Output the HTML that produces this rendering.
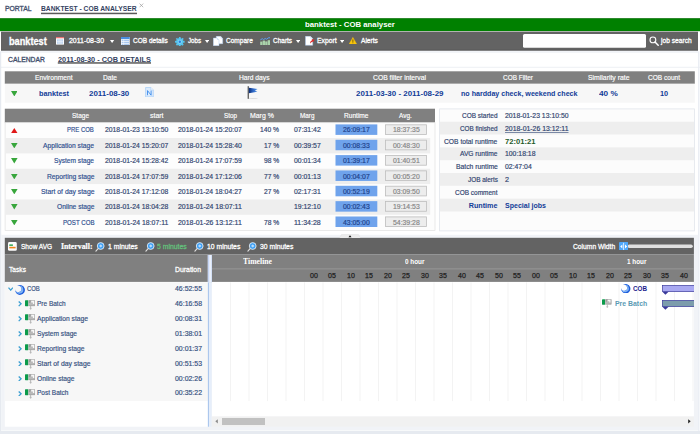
<!DOCTYPE html>
<html><head><meta charset="utf-8"><title>banktest - COB analyser</title>
<style>
html,body{margin:0;padding:0;}
body{width:700px;height:434px;overflow:hidden;background:#fff;font-family:"Liberation Sans", sans-serif;position:relative;}
#r{position:absolute;left:0;top:0;width:700px;height:434px;overflow:hidden;}
#r div,#r span,#r svg{position:absolute;}
#r span{white-space:nowrap;}
</style></head><body><div id="r">
<svg style="left:0;top:0" width="700" height="434" viewBox="0 0 700 434">
<rect x="0.00" y="0.00" width="700.00" height="434.00" fill="#ffffff"/>
<rect x="0.00" y="66.80" width="700.00" height="0.90" fill="#eceef3"/>
<rect x="0.00" y="51.40" width="1.20" height="383.00" fill="#e6eaf0"/>
<rect x="698.20" y="51.40" width="1.20" height="383.00" fill="#e6eaf2"/>
<rect x="1.20" y="234.80" width="697.00" height="196.20" fill="#f1f3f7"/>
<rect x="41.00" y="12.70" width="96.00" height="1.50" fill="#5a5a5a"/>
<rect x="0.00" y="18.40" width="700.00" height="12.80" fill="#008000"/>
<rect x="0.00" y="18.30" width="700.00" height="0.60" fill="#0a6e0a"/>
<rect x="1.00" y="31.20" width="697.00" height="0.90" fill="#a9a9a9"/>
<rect x="1.00" y="50.50" width="697.00" height="2.40" fill="#f2f4f8"/>
<rect x="1.00" y="32.00" width="697.00" height="18.50" fill="#636363"/>
<rect x="1.00" y="49.40" width="697.00" height="1.10" fill="#5b5b5b"/>
<rect x="523.00" y="34.10" width="123.00" height="13.70" fill="#ffffff" rx="1.5"/>
<rect x="57.80" y="62.20" width="93.20" height="1.50" fill="#5a5a5a"/>
<rect x="4.80" y="71.30" width="690.00" height="12.50" fill="#808080"/>
<rect x="4.80" y="83.80" width="690.00" height="18.90" fill="#f7f7f7"/>
<rect x="4.80" y="108.70" width="430.20" height="14.00" fill="#808080"/>
<rect x="5.10" y="122.70" width="429.90" height="107.75" fill="#fdfdfd" stroke="#e0e0e0" stroke-width="0.7"/>
<rect x="335.50" y="124.40" width="41.80" height="10.50" fill="#6fa3ec"/>
<rect x="385.40" y="124.80" width="41.00" height="9.70" fill="#ededed" stroke="#bdbdbd" stroke-width="0.8"/>
<rect x="5.40" y="138.05" width="424.80" height="15.35" fill="#eeeeee"/>
<rect x="335.50" y="139.75" width="41.80" height="10.50" fill="#6fa3ec"/>
<rect x="385.40" y="140.15" width="41.00" height="9.70" fill="#ededed" stroke="#bdbdbd" stroke-width="0.8"/>
<rect x="335.50" y="155.10" width="41.80" height="10.50" fill="#6fa3ec"/>
<rect x="385.40" y="155.50" width="41.00" height="9.70" fill="#ededed" stroke="#bdbdbd" stroke-width="0.8"/>
<rect x="5.40" y="168.75" width="424.80" height="15.35" fill="#eeeeee"/>
<rect x="335.50" y="170.45" width="41.80" height="10.50" fill="#6fa3ec"/>
<rect x="385.40" y="170.85" width="41.00" height="9.70" fill="#ededed" stroke="#bdbdbd" stroke-width="0.8"/>
<rect x="335.50" y="185.80" width="41.80" height="10.50" fill="#6fa3ec"/>
<rect x="385.40" y="186.20" width="41.00" height="9.70" fill="#ededed" stroke="#bdbdbd" stroke-width="0.8"/>
<rect x="5.40" y="199.45" width="424.80" height="15.35" fill="#eeeeee"/>
<rect x="335.50" y="201.15" width="41.80" height="10.50" fill="#6fa3ec"/>
<rect x="385.40" y="201.55" width="41.00" height="9.70" fill="#ededed" stroke="#bdbdbd" stroke-width="0.8"/>
<rect x="335.50" y="216.50" width="41.80" height="10.50" fill="#6fa3ec"/>
<rect x="385.40" y="216.90" width="41.00" height="9.70" fill="#ededed" stroke="#bdbdbd" stroke-width="0.8"/>
<rect x="439.60" y="108.90" width="254.80" height="122.00" fill="#fcfcfc" stroke="#e1e5ec" stroke-width="0.8"/>
<rect x="440.00" y="121.72" width="254.00" height="12.82" fill="#eeeeee"/>
<rect x="440.00" y="147.36" width="254.00" height="12.82" fill="#eeeeee"/>
<rect x="440.00" y="173.00" width="254.00" height="12.82" fill="#eeeeee"/>
<rect x="440.00" y="198.64" width="254.00" height="12.82" fill="#eeeeee"/>
<rect x="4.80" y="237.80" width="689.10" height="16.70" fill="#636363"/>
<rect x="627.50" y="244.40" width="65.30" height="3.60" fill="#e0e0e0" rx="1.8"/>
<rect x="4.80" y="254.50" width="689.10" height="27.80" fill="#808080"/>
<rect x="212.00" y="268.50" width="481.90" height="0.80" fill="#9c9c9c"/>
<rect x="4.80" y="281.90" width="203.10" height="144.80" fill="#ffffff"/>
<rect x="211.70" y="281.90" width="482.20" height="134.60" fill="#ffffff"/>
<rect x="4.80" y="282.30" width="203.10" height="118.80" fill="#f7f7f7"/>
<rect x="230.10" y="282.30" width="0.80" height="118.80" fill="#f0f0f0"/>
<rect x="248.60" y="282.30" width="0.80" height="118.80" fill="#f0f0f0"/>
<rect x="267.10" y="282.30" width="0.80" height="118.80" fill="#f0f0f0"/>
<rect x="285.60" y="282.30" width="0.80" height="118.80" fill="#f0f0f0"/>
<rect x="304.10" y="282.30" width="0.80" height="118.80" fill="#f0f0f0"/>
<rect x="322.60" y="282.30" width="0.80" height="118.80" fill="#f0f0f0"/>
<rect x="341.10" y="282.30" width="0.80" height="118.80" fill="#f0f0f0"/>
<rect x="359.60" y="282.30" width="0.80" height="118.80" fill="#f0f0f0"/>
<rect x="378.10" y="282.30" width="0.80" height="118.80" fill="#f0f0f0"/>
<rect x="396.60" y="282.30" width="0.80" height="118.80" fill="#f0f0f0"/>
<rect x="415.10" y="282.30" width="0.80" height="118.80" fill="#f0f0f0"/>
<rect x="433.60" y="282.30" width="0.80" height="118.80" fill="#f0f0f0"/>
<rect x="452.10" y="282.30" width="0.80" height="118.80" fill="#f0f0f0"/>
<rect x="470.60" y="282.30" width="0.80" height="118.80" fill="#f0f0f0"/>
<rect x="489.10" y="282.30" width="0.80" height="118.80" fill="#f0f0f0"/>
<rect x="507.60" y="282.30" width="0.80" height="118.80" fill="#f0f0f0"/>
<rect x="526.10" y="282.30" width="0.80" height="118.80" fill="#f0f0f0"/>
<rect x="544.60" y="282.30" width="0.80" height="118.80" fill="#f0f0f0"/>
<rect x="563.10" y="282.30" width="0.80" height="118.80" fill="#f0f0f0"/>
<rect x="581.60" y="282.30" width="0.80" height="118.80" fill="#f0f0f0"/>
<rect x="600.10" y="282.30" width="0.80" height="118.80" fill="#f0f0f0"/>
<rect x="618.60" y="282.30" width="0.80" height="118.80" fill="#f0f0f0"/>
<rect x="637.10" y="282.30" width="0.80" height="118.80" fill="#f0f0f0"/>
<rect x="655.60" y="282.30" width="0.80" height="118.80" fill="#f0f0f0"/>
<rect x="674.10" y="282.30" width="0.80" height="118.80" fill="#f0f0f0"/>
<rect x="692.60" y="282.30" width="0.80" height="118.80" fill="#f0f0f0"/>
<rect x="207.90" y="282.30" width="3.80" height="144.40" fill="#e6eefa"/>
<rect x="207.90" y="282.30" width="1.00" height="144.40" fill="#a6c2ec"/>
<rect x="207.80" y="255.00" width="4.20" height="27.30" fill="#eef3fc"/>
<rect x="207.80" y="255.00" width="1.50" height="27.30" fill="#c6d5f3"/>
<rect x="210.90" y="255.00" width="1.10" height="27.30" fill="#d4e0f6"/>
<rect x="211.70" y="416.50" width="482.20" height="10.20" fill="#f1f1f1"/>
<rect x="222.00" y="418.00" width="43.00" height="7.00" fill="#c1c1c1"/>
<rect x="0.00" y="430.90" width="700.00" height="3.10" fill="#e6eaf0"/>
<rect x="1.20" y="430.20" width="697.00" height="0.80" fill="#f9fafc"/>
</svg>
<span style="left:4.80px;top:4.09px;font-size:7.4px;line-height:9.62px;color:#3f4d6b;transform:scaleX(0.9207);transform-origin:0 0;-webkit-text-stroke:0.32px #3f4d6b;">PORTAL</span>
<span style="left:41.10px;top:3.96px;font-size:7.6px;line-height:9.88px;color:#34425f;font-weight:bold;transform:scaleX(0.8862);transform-origin:0 0;">BANKTEST - COB ANALYSER</span>
<svg style="left:139px;top:2.6px" width="5" height="5" viewBox="0 0 5 5"><path d="M0.6 0.6L4.2 4.2M4.2 0.6L0.6 4.2" stroke="#9a9a9a" stroke-width="0.7" fill="none"/></svg>
<span style="left:304.50px;top:19.60px;font-size:8px;line-height:10.4px;color:#ffffff;font-weight:bold;transform:scaleX(0.9710);transform-origin:0 0;">banktest - COB analyser</span>
<span style="left:8.60px;top:34.70px;font-size:10px;line-height:13.0px;color:#ffffff;font-weight:bold;transform:scaleX(0.9191);transform-origin:0 0;-webkit-text-stroke:0.3px #ffffff;">banktest</span>
<svg style="left:56px;top:37.2px" width="8" height="7.6" viewBox="0 0 8 7.6"><rect width="8" height="7.6" fill="#fff"/><rect width="8" height="1.3" fill="#e87474"/><rect x="0.9" y="2.3" width="6.2" height="4.5" fill="#bcd3f0"/><path d="M3 2.6V6.8M5 2.6V6.8M0.9 4.7H7.1" stroke="#fff" stroke-width="0.5"/></svg>
<span style="left:69.00px;top:36.39px;font-size:7.4px;line-height:9.62px;color:#ffffff;transform:scaleX(0.9392);transform-origin:0 0;-webkit-text-stroke:0.3px #ffffff;">2011-08-30</span>
<svg style="left:110.4px;top:39.800000000000004px" width="4.2" height="3" viewBox="0 0 4.2 3"><path d="M0 0H4.2L2.1 3Z" fill="#fff"/></svg>
<svg style="left:121px;top:36.9px" width="8.7" height="8.5" viewBox="0 0 8.7 8.5"><rect width="8.7" height="8.5" fill="#fff"/><rect width="8.7" height="2.2" fill="#4a8fe0"/><rect x="0.6" y="2.9" width="7.5" height="1.3" fill="#a9c8ee"/><rect x="0.6" y="4.8" width="7.5" height="1.3" fill="#a9c8ee"/><rect x="0.6" y="6.7" width="7.5" height="1.3" fill="#a9c8ee"/><rect x="2.6" y="2.2" width="0.5" height="6.3" fill="#fff"/></svg>
<span style="left:133.10px;top:36.39px;font-size:7.4px;line-height:9.62px;color:#ffffff;transform:scaleX(0.8824);transform-origin:0 0;-webkit-text-stroke:0.3px #ffffff;">COB details</span>
<svg style="left:175px;top:36.6px" width="9.6" height="9.6" viewBox="0 0 9.6 9.6"><path d="M9.61 3.84L9.61 5.76L8.48 5.53L7.92 6.88L8.87 7.52L7.52 8.87L6.88 7.92L5.53 8.48L5.76 9.61L3.84 9.61L4.07 8.48L2.72 7.92L2.08 8.87L0.73 7.52L1.68 6.88L1.12 5.53L-0.01 5.76L-0.01 3.84L1.12 4.07L1.68 2.72L0.73 2.08L2.08 0.73L2.72 1.68L4.07 1.12L3.84 -0.01L5.76 -0.01L5.53 1.12L6.88 1.68L7.52 0.73L8.87 2.08L7.92 2.72L8.48 4.07Z" fill="#55c4ef"/><circle cx="4.8" cy="4.8" r="2.0" fill="#8edcf8"/><circle cx="4.8" cy="4.8" r="1.25" fill="#2a7fe2"/></svg>
<span style="left:187.90px;top:36.39px;font-size:7.4px;line-height:9.62px;color:#ffffff;transform:scaleX(0.8448);transform-origin:0 0;-webkit-text-stroke:0.3px #ffffff;">Jobs</span>
<svg style="left:204.7px;top:39.800000000000004px" width="4.2" height="3" viewBox="0 0 4.2 3"><path d="M0 0H4.2L2.1 3Z" fill="#fff"/></svg>
<svg style="left:213.4px;top:36px" width="10.2" height="10" viewBox="0 0 10.2 10"><path d="M3.3 0.3H7.6L9.7 2.4V7.7H3.3Z" fill="#fff" stroke="#b4d0f2" stroke-width="0.5"/><path d="M7.6 0.3V2.4H9.7Z" fill="#cfe0f6"/><path d="M0.3 2.1H4.2L6 3.9V9.7H0.3Z" fill="#fff" stroke="#a9c8ef" stroke-width="0.5"/><path d="M4.2 2.1V3.9H6Z" fill="#cfe0f6"/></svg>
<span style="left:226.00px;top:36.39px;font-size:7.4px;line-height:9.62px;color:#ffffff;transform:scaleX(0.8847);transform-origin:0 0;-webkit-text-stroke:0.3px #ffffff;">Compare</span>
<svg style="left:259.6px;top:36.6px" width="10.4" height="8.6" viewBox="0 0 10.4 8.6"><rect x="0.2" y="4.6" width="2.3" height="3.8" fill="#aad2aa"/><rect x="2.7" y="3.6" width="2.3" height="4.8" fill="#aad2aa"/><rect x="5.2" y="4.4" width="2.3" height="4" fill="#aad2aa"/><rect x="7.7" y="3.2" width="2.4" height="5.2" fill="#aad2aa"/><path d="M0.3 2.9L2.3 1.7L3.6 2.6L5.2 1.5L6.6 2.2L8.2 0.9L10.1 0.7" stroke="#5b9df0" stroke-width="1" fill="none"/></svg>
<span style="left:272.60px;top:36.39px;font-size:7.4px;line-height:9.62px;color:#ffffff;transform:scaleX(0.8769);transform-origin:0 0;-webkit-text-stroke:0.3px #ffffff;">Charts</span>
<svg style="left:295.7px;top:39.800000000000004px" width="4.2" height="3" viewBox="0 0 4.2 3"><path d="M0 0H4.2L2.1 3Z" fill="#fff"/></svg>
<svg style="left:304.6px;top:36px" width="10" height="9.6" viewBox="0 0 10 9.6"><path d="M0.5 0.3H5.4L7.7 2.6V9.3H0.5Z" fill="#fff" stroke="#a9c8ef" stroke-width="0.5"/><path d="M5.4 0.3V2.6H7.7Z" fill="#cfe0f6"/><path transform="translate(0.2 -0.5) rotate(-22 6.5 5.5)" d="M4 7.4C4.5 5.7 5.8 4.9 7.2 4.9V3.7L9.6 5.5L7.2 7.2V6.2C6 6.2 4.9 6.5 4 7.4Z" fill="#dc2a2a"/></svg>
<span style="left:316.70px;top:36.39px;font-size:7.4px;line-height:9.62px;color:#ffffff;transform:scaleX(0.9216);transform-origin:0 0;-webkit-text-stroke:0.3px #ffffff;">Export</span>
<svg style="left:339.7px;top:39.800000000000004px" width="4.2" height="3" viewBox="0 0 4.2 3"><path d="M0 0H4.2L2.1 3Z" fill="#fff"/></svg>
<svg style="left:348.8px;top:37.4px" width="7.8" height="7" viewBox="0 0 7.8 7"><path d="M3.9 0.2L7.7 6.9H0.1Z" fill="#f7c40c" stroke="#f7c40c" stroke-width="0.3" stroke-linejoin="round"/><rect x="3.5" y="2.4" width="0.8" height="2.5" fill="#5e4700"/><rect x="3.5" y="5.4" width="0.8" height="0.8" fill="#5e4700"/></svg>
<span style="left:361.40px;top:36.39px;font-size:7.4px;line-height:9.62px;color:#ffffff;transform:scaleX(0.8939);transform-origin:0 0;-webkit-text-stroke:0.3px #ffffff;">Alerts</span>
<svg style="left:648.6px;top:36.4px" width="10" height="10" viewBox="0 0 10 10"><circle cx="3.9" cy="3.9" r="2.9" fill="none" stroke="#fff" stroke-width="1.1"/><path d="M6 6L9.2 9.2" stroke="#fff" stroke-width="1.5" stroke-linecap="round"/></svg>
<span style="left:661.30px;top:36.39px;font-size:7.4px;line-height:9.62px;color:#ffffff;transform:scaleX(0.9000);transform-origin:0 0;-webkit-text-stroke:0.3px #ffffff;">job search</span>
<span style="left:8.00px;top:54.69px;font-size:7.4px;line-height:9.62px;color:#3f4d6b;transform:scaleX(0.9143);transform-origin:0 0;-webkit-text-stroke:0.32px #3f4d6b;">CALENDAR</span>
<span style="left:57.80px;top:54.56px;font-size:7.6px;line-height:9.88px;color:#34425f;font-weight:bold;transform:scaleX(0.9680);transform-origin:0 0;">2011-08-30 - COB DETAILS</span>
<span style="left:35.00px;top:72.65px;font-size:7.0px;line-height:9.1px;color:#fff;transform:scaleX(0.9568);transform-origin:0 0;-webkit-text-stroke:0.16px #fff;">Environment</span>
<span style="left:102.50px;top:72.65px;font-size:7.0px;line-height:9.1px;color:#fff;transform:scaleX(0.9461);transform-origin:0 0;-webkit-text-stroke:0.16px #fff;">Date</span>
<span style="left:238.75px;top:72.65px;font-size:7.0px;line-height:9.1px;color:#fff;transform:scaleX(0.9559);transform-origin:0 0;-webkit-text-stroke:0.16px #fff;">Hard days</span>
<span style="left:372.50px;top:72.65px;font-size:7.0px;line-height:9.1px;color:#fff;transform:scaleX(0.9661);transform-origin:0 0;-webkit-text-stroke:0.16px #fff;">COB filter interval</span>
<span style="left:503.00px;top:72.65px;font-size:7.0px;line-height:9.1px;color:#fff;transform:scaleX(0.9182);transform-origin:0 0;-webkit-text-stroke:0.16px #fff;">COB Filter</span>
<span style="left:587.75px;top:72.65px;font-size:7.0px;line-height:9.1px;color:#fff;transform:scaleX(0.9786);transform-origin:0 0;-webkit-text-stroke:0.16px #fff;">Similarity rate</span>
<span style="left:648.00px;top:72.65px;font-size:7.0px;line-height:9.1px;color:#fff;transform:scaleX(0.9343);transform-origin:0 0;-webkit-text-stroke:0.16px #fff;">COB count</span>
<svg style="left:10.80px;top:90.80px" width="6.6" height="5.4" viewBox="0 0 6.6 5.4"><path d="M0 0H6.6L3.3 5.4Z" fill="#38a63c"/></svg>
<span style="left:39.20px;top:88.56px;font-size:7.6px;line-height:9.88px;color:#123c98;font-weight:bold;transform:scaleX(0.9605);transform-origin:0 0;">banktest</span>
<span style="left:88.90px;top:88.56px;font-size:7.6px;line-height:9.88px;color:#123c98;font-weight:bold;transform:scaleX(1.0485);transform-origin:0 0;">2011-08-30</span>
<svg style="left:145px;top:86.8px" width="9" height="10.6" viewBox="0 0 9 10.6"><path d="M0.6 0.5H5.8L8.3 3V10H0.6Z" fill="#dcebfc" stroke="#a3ccf6" stroke-width="0.7"/><path d="M5.8 0.5V3H8.3" fill="#f4f9ff" stroke="#a3ccf6" stroke-width="0.5"/><path d="M2.5 8.2V3.6L6.1 8.2V3.6" stroke="#3586ea" stroke-width="0.85" fill="none"/></svg>
<svg style="left:247px;top:85.8px" width="12" height="13.6" viewBox="0 0 12 13.6"><defs><linearGradient id="fg" x1="0" x2="1" y1="0" y2="0"><stop offset="0" stop-color="#0b2c74"/><stop offset="0.45" stop-color="#2a62c0"/><stop offset="1" stop-color="#5a9ae8"/></linearGradient></defs><ellipse cx="6" cy="12.9" rx="5" ry="0.55" fill="#d2d2d2"/><rect x="0.7" y="0.2" width="1" height="12.6" fill="#2c2c2c"/><path d="M1.8 1.8L10.6 3L8 4.4L10.4 5.8L1.8 7.2Z" fill="url(#fg)"/></svg>
<span style="left:355.50px;top:88.56px;font-size:7.6px;line-height:9.88px;color:#123c98;font-weight:bold;transform:scaleX(1.0465);transform-origin:0 0;">2011-03-30 - 2011-08-29</span>
<span style="left:461.00px;top:88.56px;font-size:7.6px;line-height:9.88px;color:#123c98;font-weight:bold;transform:scaleX(0.9356);transform-origin:0 0;">no hardday check, weekend check</span>
<span style="left:599.00px;top:88.56px;font-size:7.6px;line-height:9.88px;color:#123c98;font-weight:bold;transform:scaleX(1.0859);transform-origin:0 0;">40 %</span>
<span style="left:659.80px;top:88.56px;font-size:7.6px;line-height:9.88px;color:#123c98;font-weight:bold;transform:scaleX(0.9701);transform-origin:0 0;">10</span>
<span style="left:72.00px;top:111.05px;font-size:7.0px;line-height:9.1px;color:#fff;transform:scaleX(0.9291);transform-origin:0 0;-webkit-text-stroke:0.16px #fff;">Stage</span>
<span style="left:149.55px;top:111.05px;font-size:7.0px;line-height:9.1px;color:#fff;transform:scaleX(0.9908);transform-origin:0 0;-webkit-text-stroke:0.16px #fff;">start</span>
<span style="left:223.70px;top:111.05px;font-size:7.0px;line-height:9.1px;color:#fff;transform:scaleX(0.9024);transform-origin:0 0;-webkit-text-stroke:0.16px #fff;">Stop</span>
<span style="left:250.00px;top:111.05px;font-size:7.0px;line-height:9.1px;color:#fff;transform:scaleX(0.9865);transform-origin:0 0;-webkit-text-stroke:0.16px #fff;">Marg %</span>
<span style="left:299.95px;top:111.05px;font-size:7.0px;line-height:9.1px;color:#fff;transform:scaleX(0.9089);transform-origin:0 0;-webkit-text-stroke:0.16px #fff;">Marg</span>
<span style="left:344.25px;top:111.05px;font-size:7.0px;line-height:9.1px;color:#fff;transform:scaleX(0.9395);transform-origin:0 0;-webkit-text-stroke:0.16px #fff;">Runtime</span>
<span style="left:399.30px;top:111.05px;font-size:7.0px;line-height:9.1px;color:#fff;transform:scaleX(0.9215);transform-origin:0 0;-webkit-text-stroke:0.16px #fff;">Avg.</span>
<svg style="left:11.40px;top:127.83px" width="6.6" height="5.2" viewBox="0 0 6.6 5.2"><path d="M0 5.2H6.6L3.3 0Z" fill="#e01818"/></svg>
<span style="left:67.20px;top:125.44px;font-size:7.2px;line-height:9.36px;color:#2f4f8f;transform:scaleX(0.8282);transform-origin:0 0;-webkit-text-stroke:0.18px #2f4f8f;">PRE COB</span>
<span style="left:104.60px;top:125.44px;font-size:7.2px;line-height:9.36px;color:#30446f;transform:scaleX(0.9483);transform-origin:0 0;-webkit-text-stroke:0.18px #30446f;">2018-01-23 13:10:50</span>
<span style="left:178.20px;top:125.44px;font-size:7.2px;line-height:9.36px;color:#30446f;transform:scaleX(0.9558);transform-origin:0 0;-webkit-text-stroke:0.18px #30446f;">2018-01-24 15:20:07</span>
<span style="left:259.80px;top:125.44px;font-size:7.2px;line-height:9.36px;color:#30446f;transform:scaleX(0.9318);transform-origin:0 0;-webkit-text-stroke:0.18px #30446f;">140 %</span>
<span style="left:293.80px;top:125.44px;font-size:7.2px;line-height:9.36px;color:#30446f;transform:scaleX(0.9541);transform-origin:0 0;-webkit-text-stroke:0.18px #30446f;">07:31:42</span>
<span style="left:343.05px;top:125.44px;font-size:7.2px;line-height:9.36px;color:#1d3f8a;transform:scaleX(0.9541);transform-origin:0 0;-webkit-text-stroke:0.18px #1d3f8a;">26:09:17</span>
<span style="left:392.55px;top:125.44px;font-size:7.2px;line-height:9.36px;color:#858585;transform:scaleX(0.9541);transform-origin:0 0;-webkit-text-stroke:0.18px #858585;">18:37:35</span>
<svg style="left:11.40px;top:142.88px" width="6.6" height="5.4" viewBox="0 0 6.6 5.4"><path d="M0 0H6.6L3.3 5.4Z" fill="#38a63c"/></svg>
<span style="left:43.00px;top:140.80px;font-size:7.2px;line-height:9.36px;color:#2f4f8f;transform:scaleX(0.9315);transform-origin:0 0;-webkit-text-stroke:0.18px #2f4f8f;">Application stage</span>
<span style="left:104.60px;top:140.80px;font-size:7.2px;line-height:9.36px;color:#30446f;transform:scaleX(0.9483);transform-origin:0 0;-webkit-text-stroke:0.18px #30446f;">2018-01-24 15:20:07</span>
<span style="left:178.20px;top:140.80px;font-size:7.2px;line-height:9.36px;color:#30446f;transform:scaleX(0.9558);transform-origin:0 0;-webkit-text-stroke:0.18px #30446f;">2018-01-24 15:28:40</span>
<span style="left:263.60px;top:140.80px;font-size:7.2px;line-height:9.36px;color:#30446f;transform:scaleX(0.9274);transform-origin:0 0;-webkit-text-stroke:0.18px #30446f;">17 %</span>
<span style="left:293.80px;top:140.80px;font-size:7.2px;line-height:9.36px;color:#30446f;transform:scaleX(0.9541);transform-origin:0 0;-webkit-text-stroke:0.18px #30446f;">00:39:57</span>
<span style="left:343.05px;top:140.80px;font-size:7.2px;line-height:9.36px;color:#1d3f8a;transform:scaleX(0.9541);transform-origin:0 0;-webkit-text-stroke:0.18px #1d3f8a;">00:08:33</span>
<span style="left:392.55px;top:140.80px;font-size:7.2px;line-height:9.36px;color:#858585;transform:scaleX(0.9541);transform-origin:0 0;-webkit-text-stroke:0.18px #858585;">00:48:30</span>
<svg style="left:11.40px;top:158.23px" width="6.6" height="5.4" viewBox="0 0 6.6 5.4"><path d="M0 0H6.6L3.3 5.4Z" fill="#38a63c"/></svg>
<span style="left:54.00px;top:156.15px;font-size:7.2px;line-height:9.36px;color:#2f4f8f;transform:scaleX(0.9186);transform-origin:0 0;-webkit-text-stroke:0.18px #2f4f8f;">System stage</span>
<span style="left:104.60px;top:156.15px;font-size:7.2px;line-height:9.36px;color:#30446f;transform:scaleX(0.9483);transform-origin:0 0;-webkit-text-stroke:0.18px #30446f;">2018-01-24 15:28:42</span>
<span style="left:178.20px;top:156.15px;font-size:7.2px;line-height:9.36px;color:#30446f;transform:scaleX(0.9558);transform-origin:0 0;-webkit-text-stroke:0.18px #30446f;">2018-01-24 17:07:59</span>
<span style="left:263.60px;top:156.15px;font-size:7.2px;line-height:9.36px;color:#30446f;transform:scaleX(0.9274);transform-origin:0 0;-webkit-text-stroke:0.18px #30446f;">98 %</span>
<span style="left:293.80px;top:156.15px;font-size:7.2px;line-height:9.36px;color:#30446f;transform:scaleX(0.9541);transform-origin:0 0;-webkit-text-stroke:0.18px #30446f;">00:01:34</span>
<span style="left:343.05px;top:156.15px;font-size:7.2px;line-height:9.36px;color:#1d3f8a;transform:scaleX(0.9541);transform-origin:0 0;-webkit-text-stroke:0.18px #1d3f8a;">01:39:17</span>
<span style="left:392.55px;top:156.15px;font-size:7.2px;line-height:9.36px;color:#858585;transform:scaleX(0.9541);transform-origin:0 0;-webkit-text-stroke:0.18px #858585;">01:40:51</span>
<svg style="left:11.40px;top:173.58px" width="6.6" height="5.4" viewBox="0 0 6.6 5.4"><path d="M0 0H6.6L3.3 5.4Z" fill="#38a63c"/></svg>
<span style="left:46.50px;top:171.50px;font-size:7.2px;line-height:9.36px;color:#2f4f8f;transform:scaleX(0.9360);transform-origin:0 0;-webkit-text-stroke:0.18px #2f4f8f;">Reporting stage</span>
<span style="left:104.60px;top:171.50px;font-size:7.2px;line-height:9.36px;color:#30446f;transform:scaleX(0.9483);transform-origin:0 0;-webkit-text-stroke:0.18px #30446f;">2018-01-24 17:07:59</span>
<span style="left:178.20px;top:171.50px;font-size:7.2px;line-height:9.36px;color:#30446f;transform:scaleX(0.9558);transform-origin:0 0;-webkit-text-stroke:0.18px #30446f;">2018-01-24 17:12:06</span>
<span style="left:263.60px;top:171.50px;font-size:7.2px;line-height:9.36px;color:#30446f;transform:scaleX(0.9274);transform-origin:0 0;-webkit-text-stroke:0.18px #30446f;">77 %</span>
<span style="left:293.80px;top:171.50px;font-size:7.2px;line-height:9.36px;color:#30446f;transform:scaleX(0.9541);transform-origin:0 0;-webkit-text-stroke:0.18px #30446f;">00:01:13</span>
<span style="left:343.05px;top:171.50px;font-size:7.2px;line-height:9.36px;color:#1d3f8a;transform:scaleX(0.9541);transform-origin:0 0;-webkit-text-stroke:0.18px #1d3f8a;">00:04:07</span>
<span style="left:392.55px;top:171.50px;font-size:7.2px;line-height:9.36px;color:#858585;transform:scaleX(0.9541);transform-origin:0 0;-webkit-text-stroke:0.18px #858585;">00:05:20</span>
<svg style="left:11.40px;top:188.93px" width="6.6" height="5.4" viewBox="0 0 6.6 5.4"><path d="M0 0H6.6L3.3 5.4Z" fill="#38a63c"/></svg>
<span style="left:40.50px;top:186.84px;font-size:7.2px;line-height:9.36px;color:#2f4f8f;transform:scaleX(0.9495);transform-origin:0 0;-webkit-text-stroke:0.18px #2f4f8f;">Start of day stage</span>
<span style="left:104.60px;top:186.84px;font-size:7.2px;line-height:9.36px;color:#30446f;transform:scaleX(0.9483);transform-origin:0 0;-webkit-text-stroke:0.18px #30446f;">2018-01-24 17:12:08</span>
<span style="left:178.20px;top:186.84px;font-size:7.2px;line-height:9.36px;color:#30446f;transform:scaleX(0.9558);transform-origin:0 0;-webkit-text-stroke:0.18px #30446f;">2018-01-24 18:04:27</span>
<span style="left:263.60px;top:186.84px;font-size:7.2px;line-height:9.36px;color:#30446f;transform:scaleX(0.9274);transform-origin:0 0;-webkit-text-stroke:0.18px #30446f;">27 %</span>
<span style="left:293.80px;top:186.84px;font-size:7.2px;line-height:9.36px;color:#30446f;transform:scaleX(0.9541);transform-origin:0 0;-webkit-text-stroke:0.18px #30446f;">02:17:31</span>
<span style="left:343.05px;top:186.84px;font-size:7.2px;line-height:9.36px;color:#1d3f8a;transform:scaleX(0.9541);transform-origin:0 0;-webkit-text-stroke:0.18px #1d3f8a;">00:52:19</span>
<span style="left:392.55px;top:186.84px;font-size:7.2px;line-height:9.36px;color:#858585;transform:scaleX(0.9541);transform-origin:0 0;-webkit-text-stroke:0.18px #858585;">03:09:50</span>
<svg style="left:11.40px;top:204.28px" width="6.6" height="5.4" viewBox="0 0 6.6 5.4"><path d="M0 0H6.6L3.3 5.4Z" fill="#38a63c"/></svg>
<span style="left:56.50px;top:202.19px;font-size:7.2px;line-height:9.36px;color:#2f4f8f;transform:scaleX(0.9292);transform-origin:0 0;-webkit-text-stroke:0.18px #2f4f8f;">Online stage</span>
<span style="left:104.60px;top:202.19px;font-size:7.2px;line-height:9.36px;color:#30446f;transform:scaleX(0.9483);transform-origin:0 0;-webkit-text-stroke:0.18px #30446f;">2018-01-24 18:04:28</span>
<span style="left:178.20px;top:202.19px;font-size:7.2px;line-height:9.36px;color:#30446f;transform:scaleX(0.9635);transform-origin:0 0;-webkit-text-stroke:0.18px #30446f;">2018-01-24 18:07:11</span>
<span style="left:293.80px;top:202.19px;font-size:7.2px;line-height:9.36px;color:#30446f;transform:scaleX(0.9541);transform-origin:0 0;-webkit-text-stroke:0.18px #30446f;">19:12:10</span>
<span style="left:343.05px;top:202.19px;font-size:7.2px;line-height:9.36px;color:#1d3f8a;transform:scaleX(0.9541);transform-origin:0 0;-webkit-text-stroke:0.18px #1d3f8a;">00:02:43</span>
<span style="left:392.55px;top:202.19px;font-size:7.2px;line-height:9.36px;color:#858585;transform:scaleX(0.9541);transform-origin:0 0;-webkit-text-stroke:0.18px #858585;">19:14:53</span>
<svg style="left:11.40px;top:219.63px" width="6.6" height="5.4" viewBox="0 0 6.6 5.4"><path d="M0 0H6.6L3.3 5.4Z" fill="#38a63c"/></svg>
<span style="left:62.50px;top:217.55px;font-size:7.2px;line-height:9.36px;color:#2f4f8f;transform:scaleX(0.8510);transform-origin:0 0;-webkit-text-stroke:0.18px #2f4f8f;">POST COB</span>
<span style="left:104.60px;top:217.55px;font-size:7.2px;line-height:9.36px;color:#30446f;transform:scaleX(0.9559);transform-origin:0 0;-webkit-text-stroke:0.18px #30446f;">2018-01-24 18:07:11</span>
<span style="left:178.20px;top:217.55px;font-size:7.2px;line-height:9.36px;color:#30446f;transform:scaleX(0.9635);transform-origin:0 0;-webkit-text-stroke:0.18px #30446f;">2018-01-26 13:12:11</span>
<span style="left:263.60px;top:217.55px;font-size:7.2px;line-height:9.36px;color:#30446f;transform:scaleX(0.9274);transform-origin:0 0;-webkit-text-stroke:0.18px #30446f;">78 %</span>
<span style="left:293.80px;top:217.55px;font-size:7.2px;line-height:9.36px;color:#30446f;transform:scaleX(0.9726);transform-origin:0 0;-webkit-text-stroke:0.18px #30446f;">11:34:28</span>
<span style="left:343.05px;top:217.55px;font-size:7.2px;line-height:9.36px;color:#1d3f8a;transform:scaleX(0.9541);transform-origin:0 0;-webkit-text-stroke:0.18px #1d3f8a;">43:05:00</span>
<span style="left:392.55px;top:217.55px;font-size:7.2px;line-height:9.36px;color:#858585;transform:scaleX(0.9541);transform-origin:0 0;-webkit-text-stroke:0.18px #858585;">54:39:28</span>
<span style="left:462.00px;top:110.93px;font-size:7.2px;line-height:9.36px;color:#30446f;transform:scaleX(0.8977);transform-origin:0 0;-webkit-text-stroke:0.18px #30446f;">COB started</span>
<span style="left:505.00px;top:110.93px;font-size:7.2px;line-height:9.36px;color:#30446f;transform:scaleX(0.9513);transform-origin:0 0;-webkit-text-stroke:0.18px #30446f;">2018-01-23 13:10:50</span>
<span style="left:460.00px;top:123.75px;font-size:7.2px;line-height:9.36px;color:#30446f;transform:scaleX(0.8853);transform-origin:0 0;-webkit-text-stroke:0.18px #30446f;">COB finished</span>
<span style="left:505.00px;top:123.75px;font-size:7.2px;line-height:9.36px;color:#30446f;transform:scaleX(0.9589);transform-origin:0 0;-webkit-text-stroke:0.18px #30446f;text-decoration:underline;text-decoration-thickness:0.6px;text-underline-offset:0.8px;text-decoration-color:#7a88a5;">2018-01-26 13:12:11</span>
<span style="left:444.20px;top:136.57px;font-size:7.2px;line-height:9.36px;color:#30446f;transform:scaleX(0.9330);transform-origin:0 0;-webkit-text-stroke:0.18px #30446f;">COB total runtime</span>
<span style="left:505.00px;top:136.57px;font-size:7.2px;line-height:9.36px;color:#1f5a2a;font-weight:bold;transform:scaleX(1.0597);transform-origin:0 0;">72:01:21</span>
<span style="left:460.00px;top:149.39px;font-size:7.2px;line-height:9.36px;color:#30446f;transform:scaleX(0.9234);transform-origin:0 0;-webkit-text-stroke:0.18px #30446f;">AVG runtime</span>
<span style="left:505.00px;top:149.39px;font-size:7.2px;line-height:9.36px;color:#30446f;transform:scaleX(0.9536);transform-origin:0 0;-webkit-text-stroke:0.18px #30446f;">100:18:18</span>
<span style="left:455.70px;top:162.21px;font-size:7.2px;line-height:9.36px;color:#30446f;transform:scaleX(0.9426);transform-origin:0 0;-webkit-text-stroke:0.18px #30446f;">Batch runtime</span>
<span style="left:505.00px;top:162.21px;font-size:7.2px;line-height:9.36px;color:#30446f;transform:scaleX(0.9541);transform-origin:0 0;-webkit-text-stroke:0.18px #30446f;">02:47:04</span>
<span style="left:467.50px;top:175.03px;font-size:7.2px;line-height:9.36px;color:#30446f;transform:scaleX(0.8939);transform-origin:0 0;-webkit-text-stroke:0.18px #30446f;">JOB alerts</span>
<span style="left:505.00px;top:175.03px;font-size:7.2px;line-height:9.36px;color:#30446f;-webkit-text-stroke:0.18px #30446f;">2</span>
<span style="left:455.00px;top:187.85px;font-size:7.2px;line-height:9.36px;color:#30446f;transform:scaleX(0.9016);transform-origin:0 0;-webkit-text-stroke:0.18px #30446f;">COB comment</span>
<span style="left:468.70px;top:200.67px;font-size:7.2px;line-height:9.36px;color:#123c98;font-weight:bold;">Runtime</span>
<span style="left:505.00px;top:200.67px;font-size:7.2px;line-height:9.36px;color:#123c98;font-weight:bold;transform:scaleX(0.9773);transform-origin:0 0;">Special jobs</span>
<svg style="left:339px;top:233.8px" width="22" height="4.2" viewBox="0 0 22 4.2"><path d="M0.3 4.2L2.6 0.4H19.4L21.7 4.2Z" fill="#ececec" stroke="#dcdcdc" stroke-width="0.4"/><path d="M11 1.2L12.5 3.2H9.5Z" fill="#111"/></svg>
<svg style="left:8.1px;top:241.9px" width="8.8" height="8.8" viewBox="0 0 8.8 8.8"><rect width="8.8" height="8.8" rx="1.4" fill="#fdfdfd"/><rect x="1.3" y="2.4" width="3.6" height="1.5" fill="#2fa84f"/><rect x="1.3" y="4.8" width="6.3" height="1.6" fill="#f0861a"/></svg>
<span style="left:20.60px;top:241.99px;font-size:7.4px;line-height:9.62px;color:#fff;transform:scaleX(0.8863);transform-origin:0 0;-webkit-text-stroke:0.28px #fff;">Show AVG</span>
<span style="left:60.90px;top:242.43px;font-size:7.8px;line-height:10.14px;color:#fff;font-weight:bold;font-family:'Liberation Serif', serif;-webkit-text-stroke:0.2px #fff;">Intervall:</span>
<svg style="left:95.20px;top:241.90px" width="10" height="10" viewBox="0 0 10 10"><path d="M3.1 6.7L0.9 9.1" stroke="#e2e2e2" stroke-width="1.1" stroke-linecap="round"/><circle cx="5.7" cy="4" r="3.4" fill="#3d9ff5" stroke="#f6f6f6" stroke-width="0.8"/><circle cx="5.7" cy="4" r="1.15" fill="#f2f8ff"/><path d="M3.9 4H7.5M5.7 2.2V5.8" stroke="#8cc6fa" stroke-width="0.5"/></svg>
<span style="left:108.20px;top:241.99px;font-size:7.4px;line-height:9.62px;color:#fff;transform:scaleX(0.9236);transform-origin:0 0;-webkit-text-stroke:0.28px #fff;">1 minutes</span>
<svg style="left:144.70px;top:241.90px" width="10" height="10" viewBox="0 0 10 10"><path d="M3.1 6.7L0.9 9.1" stroke="#e2e2e2" stroke-width="1.1" stroke-linecap="round"/><circle cx="5.7" cy="4" r="3.4" fill="#3d9ff5" stroke="#f6f6f6" stroke-width="0.8"/><circle cx="5.7" cy="4" r="1.15" fill="#f2f8ff"/><path d="M3.9 4H7.5M5.7 2.2V5.8" stroke="#8cc6fa" stroke-width="0.5"/></svg>
<span style="left:157.40px;top:241.99px;font-size:7.4px;line-height:9.62px;color:#63c07c;transform:scaleX(0.9236);transform-origin:0 0;-webkit-text-stroke:0.28px #63c07c;">5 minutes</span>
<svg style="left:194.20px;top:241.90px" width="10" height="10" viewBox="0 0 10 10"><path d="M3.1 6.7L0.9 9.1" stroke="#e2e2e2" stroke-width="1.1" stroke-linecap="round"/><circle cx="5.7" cy="4" r="3.4" fill="#3d9ff5" stroke="#f6f6f6" stroke-width="0.8"/><circle cx="5.7" cy="4" r="1.15" fill="#f2f8ff"/><path d="M3.9 4H7.5M5.7 2.2V5.8" stroke="#8cc6fa" stroke-width="0.5"/></svg>
<span style="left:206.80px;top:241.99px;font-size:7.4px;line-height:9.62px;color:#fff;transform:scaleX(0.9210);transform-origin:0 0;-webkit-text-stroke:0.28px #fff;">10 minutes</span>
<svg style="left:246.70px;top:241.90px" width="10" height="10" viewBox="0 0 10 10"><path d="M3.1 6.7L0.9 9.1" stroke="#e2e2e2" stroke-width="1.1" stroke-linecap="round"/><circle cx="5.7" cy="4" r="3.4" fill="#3d9ff5" stroke="#f6f6f6" stroke-width="0.8"/><circle cx="5.7" cy="4" r="1.15" fill="#f2f8ff"/><path d="M3.9 4H7.5M5.7 2.2V5.8" stroke="#8cc6fa" stroke-width="0.5"/></svg>
<span style="left:259.50px;top:241.99px;font-size:7.4px;line-height:9.62px;color:#fff;transform:scaleX(0.9210);transform-origin:0 0;-webkit-text-stroke:0.28px #fff;">30 minutes</span>
<span style="left:572.80px;top:241.99px;font-size:7.4px;line-height:9.62px;color:#fff;transform:scaleX(0.9091);transform-origin:0 0;-webkit-text-stroke:0.28px #fff;">Column Width</span>
<svg style="left:618.7px;top:241.7px" width="9.4" height="8.8" viewBox="0 0 9.4 8.8"><rect width="9.4" height="8.8" rx="1" fill="#4fa7fa"/><rect x="4.3" y="0.8" width="0.8" height="7.2" fill="#fff"/><path d="M3.4 2.4L1.2 4.4L3.4 6.4Z" fill="#fff"/><path d="M6 2.4L8.2 4.4L6 6.4Z" fill="#fff"/></svg>
<span style="left:9.20px;top:264.89px;font-size:7.4px;line-height:9.62px;color:#fff;transform:scaleX(0.8999);transform-origin:0 0;-webkit-text-stroke:0.28px #fff;">Tasks</span>
<span style="left:175.20px;top:264.89px;font-size:7.4px;line-height:9.62px;color:#fff;transform:scaleX(0.9306);transform-origin:0 0;-webkit-text-stroke:0.28px #fff;">Duration</span>
<span style="left:243.20px;top:256.86px;font-size:7.6px;line-height:9.88px;color:#fff;font-weight:bold;font-family:'Liberation Serif', serif;transform:scaleX(1.0153);transform-origin:0 0;">Timeline</span>
<span style="left:405.45px;top:256.86px;font-size:7.6px;line-height:9.88px;color:#fff;font-weight:bold;transform:scaleX(0.8398);transform-origin:0 0;">0 hour</span>
<span style="left:627.25px;top:256.86px;font-size:7.6px;line-height:9.88px;color:#fff;font-weight:bold;transform:scaleX(0.8398);transform-origin:0 0;">1 hour</span>
<span style="left:309.85px;top:271.32px;font-size:7.2px;line-height:9.36px;color:#1e1e1e;transform:scaleX(0.9750);transform-origin:0 0;-webkit-text-stroke:0.25px #1e1e1e;">00</span>
<span style="left:328.35px;top:271.32px;font-size:7.2px;line-height:9.36px;color:#1e1e1e;transform:scaleX(0.9750);transform-origin:0 0;-webkit-text-stroke:0.25px #1e1e1e;">05</span>
<span style="left:346.85px;top:271.32px;font-size:7.2px;line-height:9.36px;color:#1e1e1e;transform:scaleX(0.9750);transform-origin:0 0;-webkit-text-stroke:0.25px #1e1e1e;">10</span>
<span style="left:365.35px;top:271.32px;font-size:7.2px;line-height:9.36px;color:#1e1e1e;transform:scaleX(0.9750);transform-origin:0 0;-webkit-text-stroke:0.25px #1e1e1e;">15</span>
<span style="left:383.85px;top:271.32px;font-size:7.2px;line-height:9.36px;color:#1e1e1e;transform:scaleX(0.9750);transform-origin:0 0;-webkit-text-stroke:0.25px #1e1e1e;">20</span>
<span style="left:402.35px;top:271.32px;font-size:7.2px;line-height:9.36px;color:#1e1e1e;transform:scaleX(0.9750);transform-origin:0 0;-webkit-text-stroke:0.25px #1e1e1e;">25</span>
<span style="left:420.85px;top:271.32px;font-size:7.2px;line-height:9.36px;color:#1e1e1e;transform:scaleX(0.9750);transform-origin:0 0;-webkit-text-stroke:0.25px #1e1e1e;">30</span>
<span style="left:439.35px;top:271.32px;font-size:7.2px;line-height:9.36px;color:#1e1e1e;transform:scaleX(0.9750);transform-origin:0 0;-webkit-text-stroke:0.25px #1e1e1e;">35</span>
<span style="left:457.85px;top:271.32px;font-size:7.2px;line-height:9.36px;color:#1e1e1e;transform:scaleX(0.9750);transform-origin:0 0;-webkit-text-stroke:0.25px #1e1e1e;">40</span>
<span style="left:476.35px;top:271.32px;font-size:7.2px;line-height:9.36px;color:#1e1e1e;transform:scaleX(0.9750);transform-origin:0 0;-webkit-text-stroke:0.25px #1e1e1e;">45</span>
<span style="left:494.85px;top:271.32px;font-size:7.2px;line-height:9.36px;color:#1e1e1e;transform:scaleX(0.9750);transform-origin:0 0;-webkit-text-stroke:0.25px #1e1e1e;">50</span>
<span style="left:513.35px;top:271.32px;font-size:7.2px;line-height:9.36px;color:#1e1e1e;transform:scaleX(0.9750);transform-origin:0 0;-webkit-text-stroke:0.25px #1e1e1e;">55</span>
<span style="left:531.85px;top:271.32px;font-size:7.2px;line-height:9.36px;color:#1e1e1e;transform:scaleX(0.9750);transform-origin:0 0;-webkit-text-stroke:0.25px #1e1e1e;">00</span>
<span style="left:550.35px;top:271.32px;font-size:7.2px;line-height:9.36px;color:#1e1e1e;transform:scaleX(0.9750);transform-origin:0 0;-webkit-text-stroke:0.25px #1e1e1e;">05</span>
<span style="left:568.85px;top:271.32px;font-size:7.2px;line-height:9.36px;color:#1e1e1e;transform:scaleX(0.9750);transform-origin:0 0;-webkit-text-stroke:0.25px #1e1e1e;">10</span>
<span style="left:587.35px;top:271.32px;font-size:7.2px;line-height:9.36px;color:#1e1e1e;transform:scaleX(0.9750);transform-origin:0 0;-webkit-text-stroke:0.25px #1e1e1e;">15</span>
<span style="left:605.85px;top:271.32px;font-size:7.2px;line-height:9.36px;color:#1e1e1e;transform:scaleX(0.9750);transform-origin:0 0;-webkit-text-stroke:0.25px #1e1e1e;">20</span>
<span style="left:624.35px;top:271.32px;font-size:7.2px;line-height:9.36px;color:#1e1e1e;transform:scaleX(0.9750);transform-origin:0 0;-webkit-text-stroke:0.25px #1e1e1e;">25</span>
<span style="left:642.85px;top:271.32px;font-size:7.2px;line-height:9.36px;color:#1e1e1e;transform:scaleX(0.9750);transform-origin:0 0;-webkit-text-stroke:0.25px #1e1e1e;">30</span>
<span style="left:661.35px;top:271.32px;font-size:7.2px;line-height:9.36px;color:#1e1e1e;transform:scaleX(0.9750);transform-origin:0 0;-webkit-text-stroke:0.25px #1e1e1e;">35</span>
<span style="left:679.85px;top:271.32px;font-size:7.2px;line-height:9.36px;color:#1e1e1e;transform:scaleX(0.9750);transform-origin:0 0;-webkit-text-stroke:0.25px #1e1e1e;">40</span>
<svg style="left:7.8px;top:286.84px" width="5.4" height="4" viewBox="0 0 5.4 4"><path d="M0.5 0.6L2.7 3.1L4.9 0.6" stroke="#3c9fd2" stroke-width="1.3" fill="none"/></svg>
<svg style="left:15.00px;top:284.74px" width="10.00" height="10.00" viewBox="0 0 10 10"><path d="M0.13 4.45A4.9 4.9 0 1 0 2.15 1.01A3.2 3.2 0 1 1 0.13 4.45Z" fill="#1d5ddc"/><path d="M0.66 5.81A3.9 3.9 0 1 0 3.82 0.84A3.2 3.2 0 1 1 0.66 5.81Z" fill="#7fb2f4"/></svg>
<span style="left:26.80px;top:284.36px;font-size:7.2px;line-height:9.36px;color:#35507f;transform:scaleX(0.8217);transform-origin:0 0;-webkit-text-stroke:0.18px #35507f;">COB</span>
<span style="left:175.20px;top:284.36px;font-size:7.2px;line-height:9.36px;color:#35507f;transform:scaleX(0.9648);transform-origin:0 0;-webkit-text-stroke:0.18px #35507f;">46:52:55</span>
<svg style="left:18.2px;top:301.31px" width="4" height="5.6" viewBox="0 0 4 5.6"><path d="M0.7 0.5L3.1 2.8L0.7 5.1" stroke="#3c9fd2" stroke-width="1.3" fill="none"/></svg>
<svg style="left:24.80px;top:299.61px" width="10.40" height="10.00" viewBox="0 0 10.4 10"><rect x="0" y="0.2" width="3.4" height="6" rx="0.5" fill="#0c9b4b"/><rect x="3.4" y="0.2" width="6.8" height="5.7" fill="#b9b9b9"/><path d="M3.9 0.9H6.2M3.9 2.2H5.4" stroke="#7c7c7c" stroke-width="0.7" fill="none"/><path d="M6.2 1H9.4V3.9H7.9V2.5H6.2Z" fill="#f7f7f7"/><path d="M10 0.4V5.7H3.6" stroke="#8f8f8f" stroke-width="0.5" fill="none"/><rect x="5.3" y="5.9" width="0.8" height="3.7" fill="#a8a8a8"/><path d="M4.4 8.4H7" stroke="#b0b0b0" stroke-width="0.5" fill="none"/></svg>
<span style="left:37.00px;top:299.23px;font-size:7.2px;line-height:9.36px;color:#35507f;transform:scaleX(0.9030);transform-origin:0 0;-webkit-text-stroke:0.18px #35507f;">Pre Batch</span>
<span style="left:175.20px;top:299.23px;font-size:7.2px;line-height:9.36px;color:#35507f;transform:scaleX(0.9648);transform-origin:0 0;-webkit-text-stroke:0.18px #35507f;">46:16:58</span>
<svg style="left:18.2px;top:316.19px" width="4" height="5.6" viewBox="0 0 4 5.6"><path d="M0.7 0.5L3.1 2.8L0.7 5.1" stroke="#3c9fd2" stroke-width="1.3" fill="none"/></svg>
<svg style="left:24.80px;top:314.49px" width="10.40" height="10.00" viewBox="0 0 10.4 10"><rect x="0" y="0.2" width="3.4" height="6" rx="0.5" fill="#0c9b4b"/><rect x="3.4" y="0.2" width="6.8" height="5.7" fill="#b9b9b9"/><path d="M3.9 0.9H6.2M3.9 2.2H5.4" stroke="#7c7c7c" stroke-width="0.7" fill="none"/><path d="M6.2 1H9.4V3.9H7.9V2.5H6.2Z" fill="#f7f7f7"/><path d="M10 0.4V5.7H3.6" stroke="#8f8f8f" stroke-width="0.5" fill="none"/><rect x="5.3" y="5.9" width="0.8" height="3.7" fill="#a8a8a8"/><path d="M4.4 8.4H7" stroke="#b0b0b0" stroke-width="0.5" fill="none"/></svg>
<span style="left:37.00px;top:314.11px;font-size:7.2px;line-height:9.36px;color:#35507f;transform:scaleX(0.9315);transform-origin:0 0;-webkit-text-stroke:0.18px #35507f;">Application stage</span>
<span style="left:175.20px;top:314.11px;font-size:7.2px;line-height:9.36px;color:#35507f;transform:scaleX(0.9648);transform-origin:0 0;-webkit-text-stroke:0.18px #35507f;">00:08:31</span>
<svg style="left:18.2px;top:331.06px" width="4" height="5.6" viewBox="0 0 4 5.6"><path d="M0.7 0.5L3.1 2.8L0.7 5.1" stroke="#3c9fd2" stroke-width="1.3" fill="none"/></svg>
<svg style="left:24.80px;top:329.36px" width="10.40" height="10.00" viewBox="0 0 10.4 10"><rect x="0" y="0.2" width="3.4" height="6" rx="0.5" fill="#0c9b4b"/><rect x="3.4" y="0.2" width="6.8" height="5.7" fill="#b9b9b9"/><path d="M3.9 0.9H6.2M3.9 2.2H5.4" stroke="#7c7c7c" stroke-width="0.7" fill="none"/><path d="M6.2 1H9.4V3.9H7.9V2.5H6.2Z" fill="#f7f7f7"/><path d="M10 0.4V5.7H3.6" stroke="#8f8f8f" stroke-width="0.5" fill="none"/><rect x="5.3" y="5.9" width="0.8" height="3.7" fill="#a8a8a8"/><path d="M4.4 8.4H7" stroke="#b0b0b0" stroke-width="0.5" fill="none"/></svg>
<span style="left:37.00px;top:328.98px;font-size:7.2px;line-height:9.36px;color:#35507f;transform:scaleX(0.9186);transform-origin:0 0;-webkit-text-stroke:0.18px #35507f;">System stage</span>
<span style="left:175.20px;top:328.98px;font-size:7.2px;line-height:9.36px;color:#35507f;transform:scaleX(0.9648);transform-origin:0 0;-webkit-text-stroke:0.18px #35507f;">01:38:01</span>
<svg style="left:18.2px;top:345.94px" width="4" height="5.6" viewBox="0 0 4 5.6"><path d="M0.7 0.5L3.1 2.8L0.7 5.1" stroke="#3c9fd2" stroke-width="1.3" fill="none"/></svg>
<svg style="left:24.80px;top:344.24px" width="10.40" height="10.00" viewBox="0 0 10.4 10"><rect x="0" y="0.2" width="3.4" height="6" rx="0.5" fill="#0c9b4b"/><rect x="3.4" y="0.2" width="6.8" height="5.7" fill="#b9b9b9"/><path d="M3.9 0.9H6.2M3.9 2.2H5.4" stroke="#7c7c7c" stroke-width="0.7" fill="none"/><path d="M6.2 1H9.4V3.9H7.9V2.5H6.2Z" fill="#f7f7f7"/><path d="M10 0.4V5.7H3.6" stroke="#8f8f8f" stroke-width="0.5" fill="none"/><rect x="5.3" y="5.9" width="0.8" height="3.7" fill="#a8a8a8"/><path d="M4.4 8.4H7" stroke="#b0b0b0" stroke-width="0.5" fill="none"/></svg>
<span style="left:37.00px;top:343.86px;font-size:7.2px;line-height:9.36px;color:#35507f;transform:scaleX(0.9360);transform-origin:0 0;-webkit-text-stroke:0.18px #35507f;">Reporting stage</span>
<span style="left:175.20px;top:343.86px;font-size:7.2px;line-height:9.36px;color:#35507f;transform:scaleX(0.9648);transform-origin:0 0;-webkit-text-stroke:0.18px #35507f;">00:01:37</span>
<svg style="left:18.2px;top:360.81px" width="4" height="5.6" viewBox="0 0 4 5.6"><path d="M0.7 0.5L3.1 2.8L0.7 5.1" stroke="#3c9fd2" stroke-width="1.3" fill="none"/></svg>
<svg style="left:24.80px;top:359.11px" width="10.40" height="10.00" viewBox="0 0 10.4 10"><rect x="0" y="0.2" width="3.4" height="6" rx="0.5" fill="#0c9b4b"/><rect x="3.4" y="0.2" width="6.8" height="5.7" fill="#b9b9b9"/><path d="M3.9 0.9H6.2M3.9 2.2H5.4" stroke="#7c7c7c" stroke-width="0.7" fill="none"/><path d="M6.2 1H9.4V3.9H7.9V2.5H6.2Z" fill="#f7f7f7"/><path d="M10 0.4V5.7H3.6" stroke="#8f8f8f" stroke-width="0.5" fill="none"/><rect x="5.3" y="5.9" width="0.8" height="3.7" fill="#a8a8a8"/><path d="M4.4 8.4H7" stroke="#b0b0b0" stroke-width="0.5" fill="none"/></svg>
<span style="left:37.00px;top:358.73px;font-size:7.2px;line-height:9.36px;color:#35507f;transform:scaleX(0.9495);transform-origin:0 0;-webkit-text-stroke:0.18px #35507f;">Start of day stage</span>
<span style="left:175.20px;top:358.73px;font-size:7.2px;line-height:9.36px;color:#35507f;transform:scaleX(0.9648);transform-origin:0 0;-webkit-text-stroke:0.18px #35507f;">00:51:53</span>
<svg style="left:18.2px;top:375.69px" width="4" height="5.6" viewBox="0 0 4 5.6"><path d="M0.7 0.5L3.1 2.8L0.7 5.1" stroke="#3c9fd2" stroke-width="1.3" fill="none"/></svg>
<svg style="left:24.80px;top:373.99px" width="10.40" height="10.00" viewBox="0 0 10.4 10"><rect x="0" y="0.2" width="3.4" height="6" rx="0.5" fill="#0c9b4b"/><rect x="3.4" y="0.2" width="6.8" height="5.7" fill="#b9b9b9"/><path d="M3.9 0.9H6.2M3.9 2.2H5.4" stroke="#7c7c7c" stroke-width="0.7" fill="none"/><path d="M6.2 1H9.4V3.9H7.9V2.5H6.2Z" fill="#f7f7f7"/><path d="M10 0.4V5.7H3.6" stroke="#8f8f8f" stroke-width="0.5" fill="none"/><rect x="5.3" y="5.9" width="0.8" height="3.7" fill="#a8a8a8"/><path d="M4.4 8.4H7" stroke="#b0b0b0" stroke-width="0.5" fill="none"/></svg>
<span style="left:37.00px;top:373.61px;font-size:7.2px;line-height:9.36px;color:#35507f;transform:scaleX(0.9292);transform-origin:0 0;-webkit-text-stroke:0.18px #35507f;">Online stage</span>
<span style="left:175.20px;top:373.61px;font-size:7.2px;line-height:9.36px;color:#35507f;transform:scaleX(0.9648);transform-origin:0 0;-webkit-text-stroke:0.18px #35507f;">00:02:26</span>
<svg style="left:18.2px;top:390.56px" width="4" height="5.6" viewBox="0 0 4 5.6"><path d="M0.7 0.5L3.1 2.8L0.7 5.1" stroke="#3c9fd2" stroke-width="1.3" fill="none"/></svg>
<svg style="left:24.80px;top:388.86px" width="10.40" height="10.00" viewBox="0 0 10.4 10"><rect x="0" y="0.2" width="3.4" height="6" rx="0.5" fill="#0c9b4b"/><rect x="3.4" y="0.2" width="6.8" height="5.7" fill="#b9b9b9"/><path d="M3.9 0.9H6.2M3.9 2.2H5.4" stroke="#7c7c7c" stroke-width="0.7" fill="none"/><path d="M6.2 1H9.4V3.9H7.9V2.5H6.2Z" fill="#f7f7f7"/><path d="M10 0.4V5.7H3.6" stroke="#8f8f8f" stroke-width="0.5" fill="none"/><rect x="5.3" y="5.9" width="0.8" height="3.7" fill="#a8a8a8"/><path d="M4.4 8.4H7" stroke="#b0b0b0" stroke-width="0.5" fill="none"/></svg>
<span style="left:37.00px;top:388.48px;font-size:7.2px;line-height:9.36px;color:#35507f;transform:scaleX(0.9061);transform-origin:0 0;-webkit-text-stroke:0.18px #35507f;">Post Batch</span>
<span style="left:175.20px;top:388.48px;font-size:7.2px;line-height:9.36px;color:#35507f;transform:scaleX(0.9648);transform-origin:0 0;-webkit-text-stroke:0.18px #35507f;">00:35:22</span>
<svg style="left:621.00px;top:283.80px" width="9.50" height="9.50" viewBox="0 0 10 10"><path d="M0.13 4.45A4.9 4.9 0 1 0 2.15 1.01A3.2 3.2 0 1 1 0.13 4.45Z" fill="#1d5ddc"/><path d="M0.66 5.81A3.9 3.9 0 1 0 3.82 0.84A3.2 3.2 0 1 1 0.66 5.81Z" fill="#7fb2f4"/></svg>
<span style="left:633.00px;top:284.42px;font-size:7.2px;line-height:9.36px;color:#1b1b8c;font-weight:bold;transform:scaleX(0.8759);transform-origin:0 0;">COB</span>
<svg style="left:662px;top:285px" width="32.1" height="10" viewBox="0 0 32.1 10"><path d="M0.1 6.4L3.4 9.7L6.8 6.4Z" fill="#3a3a9a"/><rect x="0.4" y="0.4" width="34" height="6.2" fill="#a9a9f2" stroke="#3c3c9c" stroke-width="0.7"/></svg>
<svg style="left:602.10px;top:299.00px" width="9.57" height="9.20" viewBox="0 0 10.4 10"><rect x="0" y="0.2" width="3.4" height="6" rx="0.5" fill="#0c9b4b"/><rect x="3.4" y="0.2" width="6.8" height="5.7" fill="#b9b9b9"/><path d="M3.9 0.9H6.2M3.9 2.2H5.4" stroke="#7c7c7c" stroke-width="0.7" fill="none"/><path d="M6.2 1H9.4V3.9H7.9V2.5H6.2Z" fill="#f7f7f7"/><path d="M10 0.4V5.7H3.6" stroke="#8f8f8f" stroke-width="0.5" fill="none"/><rect x="5.3" y="5.9" width="0.8" height="3.7" fill="#a8a8a8"/><path d="M4.4 8.4H7" stroke="#b0b0b0" stroke-width="0.5" fill="none"/></svg>
<span style="left:614.80px;top:299.42px;font-size:7.2px;line-height:9.36px;color:#5b9bb4;font-weight:bold;transform:scaleX(0.9594);transform-origin:0 0;">Pre Batch</span>
<svg style="left:662px;top:299.9px" width="32.1" height="10" viewBox="0 0 32.1 10"><path d="M0.1 6.4L3.4 9.7L6.8 6.4Z" fill="#3a3a9a"/><rect x="0.4" y="0.4" width="34" height="6.2" fill="#7c9dac" stroke="#3c3c9c" stroke-width="0.7"/></svg>
<svg style="left:214.6px;top:419.3px" width="3" height="4.6" viewBox="0 0 3 4.6"><path d="M2.8 0.2V4.4L0.3 2.3Z" fill="#8a8a8a"/></svg>
<svg style="left:688px;top:419.3px" width="3" height="4.6" viewBox="0 0 3 4.6"><path d="M0.2 0.2V4.4L2.7 2.3Z" fill="#222"/></svg>
</div></body></html>
